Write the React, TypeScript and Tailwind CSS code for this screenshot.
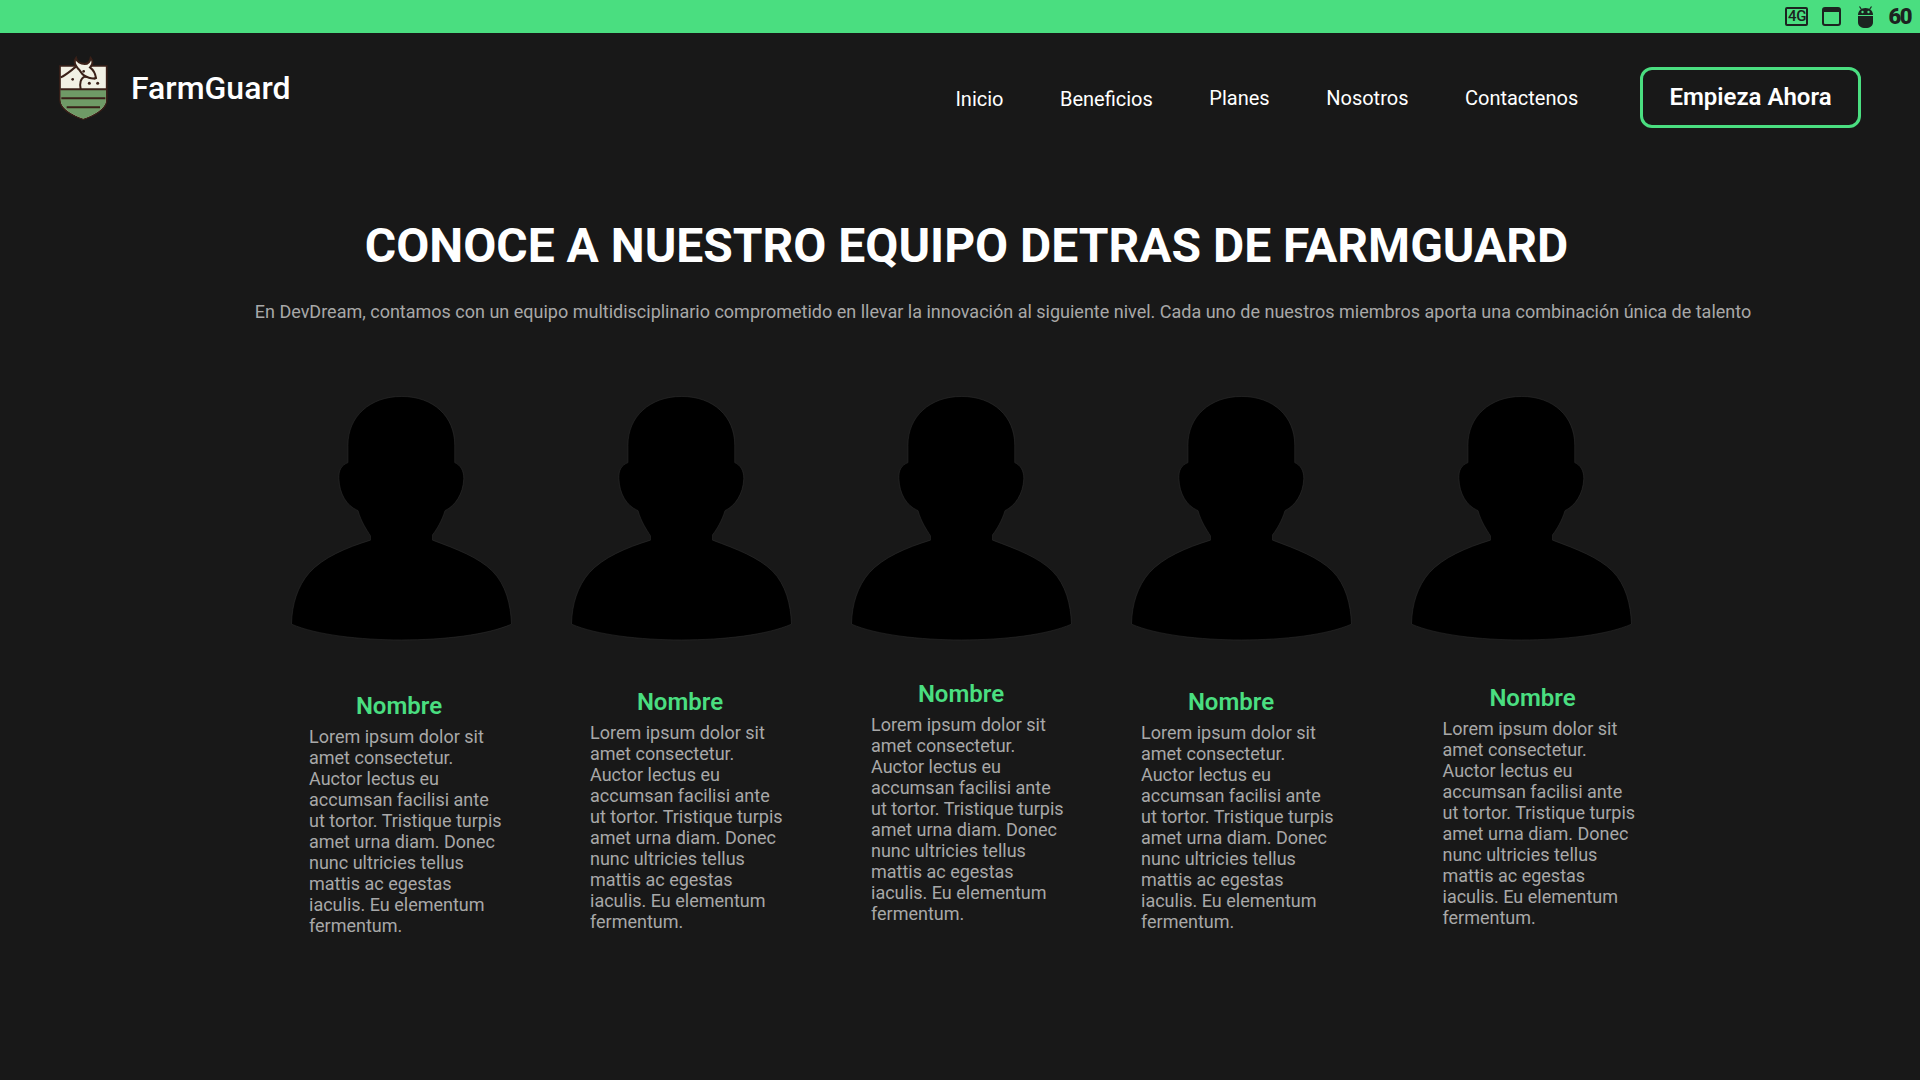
const LOREM =
  "Lorem ipsum dolor sit amet consectetur. Auctor lectus eu accumsan facilisi ante ut tortor. Tristique turpis amet urna diam. Donec nunc ultricies tellus mattis ac egestas iaculis. Eu elementum fermentum.";

const members = [
  { id: 1, gapClass: "mt-[42px]", leftClass: "ml-[39px]" },
  { id: 2, gapClass: "mt-[38px]", leftClass: "ml-[40px]" },
  { id: 3, gapClass: "mt-[30px]", leftClass: "ml-[41px]" },
  { id: 4, gapClass: "mt-[38px]", leftClass: "ml-[31px]" },
  { id: 5, gapClass: "mt-[34px]", leftClass: "ml-[52.5px]" },
];

function Silhouette() {
  return (
    <svg className="block w-[260px] h-[270px]" viewBox="3 1 774 804">
      <path
        d="M395 50C300 50 235 110 235 195L235 247C215 255 207 270 208 295C210 340 230 375 265 390C275 425 290 445 302 465L302 478C230 500 160 530 120 575C85 615 68 670 67 728C140 760 270 775 395 775C520 775 650 760 722 728C720 670 705 610 665 570C625 530 560 505 487 478L487 462C500 445 515 420 524 390C555 375 578 340 580 295C580 270 570 255 553 247L553 195C553 110 490 50 395 50Z"
        fill="#000"
        stroke="#333"
        strokeWidth={1.5}
      />
    </svg>
  );
}

function Logo() {
  return (
    <svg className="w-[70px] h-[76px] shrink-0" viewBox="0 0 210 228">
      <path d="M30 48L170 48L170 150C170 178 130 198 100 208C70 198 30 178 30 150Z" fill="#f1f0e4" stroke="#3a2018" strokeWidth={5} />
      <path d="M32 118L168 118L168 150C168 176 130 196 100 206C70 196 32 176 32 150Z" fill="#6f9a66" />
      <path d="M31 118L169 118M34 145L166 145M50 172L150 172" stroke="#3a2018" strokeWidth={6} fill="none" />
      <path d="M32 82C50 74 62 62 78 50" stroke="#3a2018" strokeWidth={6} fill="none" />
      <path d="M92 118C88 100 92 84 104 80C118 80 128 84 136 86" stroke="#3a2018" strokeWidth={6} fill="none" />
      <path d="M84 56C74 44 70 34 78 24C80 36 92 42 104 42C114 42 120 36 122 24C130 34 128 44 120 52C128 58 136 70 138 84C128 88 112 82 102 76C92 70 92 62 84 56Z" fill="#f1f0e4" stroke="#3a2018" strokeWidth={6} />
      <circle cx="101" cy="64" r="4" fill="#3a2018" />
      <circle cx="68" cy="88" r="4" fill="#3a2018" />
      <circle cx="118" cy="100" r="4.5" fill="#3a2018" />
      <circle cx="143" cy="100" r="4.5" fill="#3a2018" />
    </svg>
  );
}

function StatusBar() {
  return (
    <div className="h-[33px] bg-[#4ade80] flex items-center justify-end pr-[8px] text-[#1c2320]">
      <div className="w-[23px] h-[19px] border-2 border-[#1c2320] rounded-[2px] flex items-center justify-center text-[15px] leading-none font-medium mr-[14px] tracking-[-0.5px]">
        4G
      </div>
      <svg className="w-[19px] h-[19px] mr-[17px]" viewBox="0 0 19 19">
        <rect x="1" y="1" width="17" height="17" rx="2" fill="none" stroke="currentColor" strokeWidth={2} />
        <rect x="1" y="1" width="17" height="4" fill="currentColor" />
      </svg>
      <svg className="w-[15px] h-[22px] mr-[15px]" viewBox="0 0 15 22">
        <path d="M3.5 3.5L1.5 0.5M11.5 3.5L13.5 0.5" stroke="currentColor" strokeWidth={1.2} />
        <path d="M0 9C0 5 3 2 7.5 2C12 2 15 5 15 9Z" fill="currentColor" />
        <path d="M0 10H15V16C15 20 12 22 7.5 22C3 22 0 20 0 16Z" fill="currentColor" />
        <circle cx="4.5" cy="6" r="1.2" fill="#4ade80" />
        <circle cx="10.5" cy="6" r="1.2" fill="#4ade80" />
      </svg>
      <span className="text-[22px] font-black leading-none tracking-[-1.5px] mr-[1px]">60</span>
    </div>
  );
}

export default function App() {
  return (
    <div className="h-screen overflow-hidden bg-[#181818] text-white font-['Roboto',sans-serif]">
      <StatusBar />

      <header className="h-[106px] flex items-start pl-[50px] pr-[59px] pt-[17px]">
        <Logo />
        <span className="ml-[11px] mt-[18px] text-[32px] leading-[40px] font-medium">FarmGuard</span>
        <nav className="ml-auto flex items-center gap-[56.5px] text-[20px] mt-[17px]">
          <a className="mt-[2px]">Inicio</a>
          <a className="mt-[2px]">Beneficios</a>
          <a>Planes</a>
          <a>Nosotros</a>
          <a>Contactenos</a>
          <button className="ml-[5.25px] w-[221px] h-[61px] rounded-[12px] border-[3px] border-[#4ade80] text-[24px] leading-[28px] font-semibold pb-[2px]">
            Empieza Ahora
          </button>
        </nav>
      </header>

      <section className="text-center">
        <h1 className="ml-[13px] mt-[79px] text-[48px] leading-[56px] font-bold">
          CONOCE A NUESTRO EQUIPO DETRAS DE FARMGUARD
        </h1>
        <p className="ml-[86px] mt-[26px] text-[18px] leading-[24px] text-[#a8a8a8]">
          En DevDream, contamos con un equipo multidisciplinario comprometido en llevar la innovación al siguiente nivel. Cada uno de nuestros miembros aporta una combinación única de talento
        </p>
      </section>

      <div className="flex pl-[270px] mt-[56px]">
        {members.map((m) => (
          <div key={m.id} className="w-[280px] shrink-0">
            <Silhouette />
            <div className={`${m.gapClass} ${m.leftClass}`}>
              <h3 className="w-[180px] text-center text-[24px] leading-[28px] font-semibold text-[#4ade80]">Nombre</h3>
              <p className="w-[196px] mt-[6px] text-[18px] leading-[21px] text-[#a8a8a8]">{LOREM}</p>
            </div>
          </div>
        ))}
      </div>
    </div>
  );
}
